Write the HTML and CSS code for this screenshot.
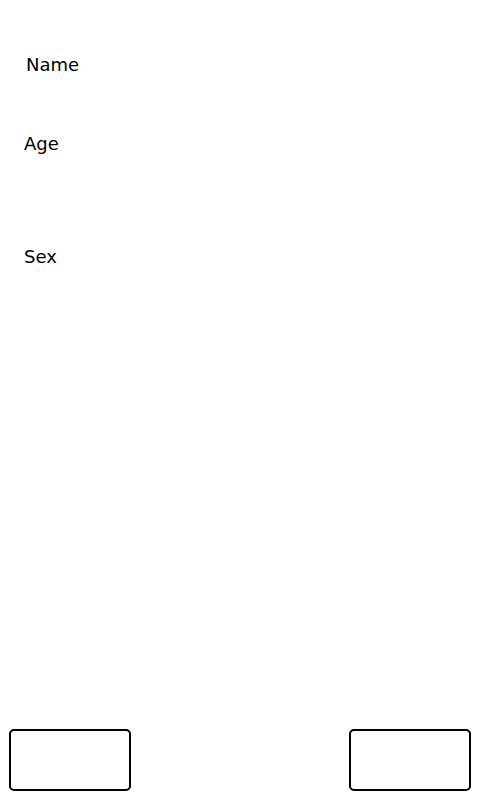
FILE: index.html
```html
<!DOCTYPE html>
<html>
<head>
<meta charset="utf-8">
<link rel="stylesheet" href="styles.css">
</head>
<body>
<div class="page">
  <div class="fields">
    <div class="label label-name">Name</div>
    <div class="label label-age">Age</div>
    <div class="label label-sex">Sex</div>
  </div>
  <div class="actions">
    <button class="btn" type="button"></button>
    <button class="btn" type="button"></button>
  </div>
</div>
</body>
</html>
```
FILE: styles.css
```css
html, body {
  margin: 0;
  padding: 0;
  background: #ffffff;
}
body {
  font-family: "DejaVu Sans", sans-serif;
  font-size: 18px;
  color: #000000;
}
.page {
  height: 800px;
  display: flex;
  flex-direction: column;
  justify-content: space-between;
  box-sizing: border-box;
  padding-bottom: 9px;
}
.fields {
  display: flex;
  flex-direction: column;
}
.label {
  line-height: 20px;
  padding-left: 24px;
}
.label-name {
  margin-top: 55px;
  padding-left: 26px;
}
.label-age {
  margin-top: 59px;
}
.label-sex {
  margin-top: 93px;
}
.actions {
  display: flex;
  justify-content: space-between;
  padding: 0 9px;
}
.btn {
  width: 122px;
  height: 62px;
  box-sizing: border-box;
  border: 2px solid #000000;
  border-radius: 5px;
  background: #ffffff;
  padding: 0;
  margin: 0;
}
```
